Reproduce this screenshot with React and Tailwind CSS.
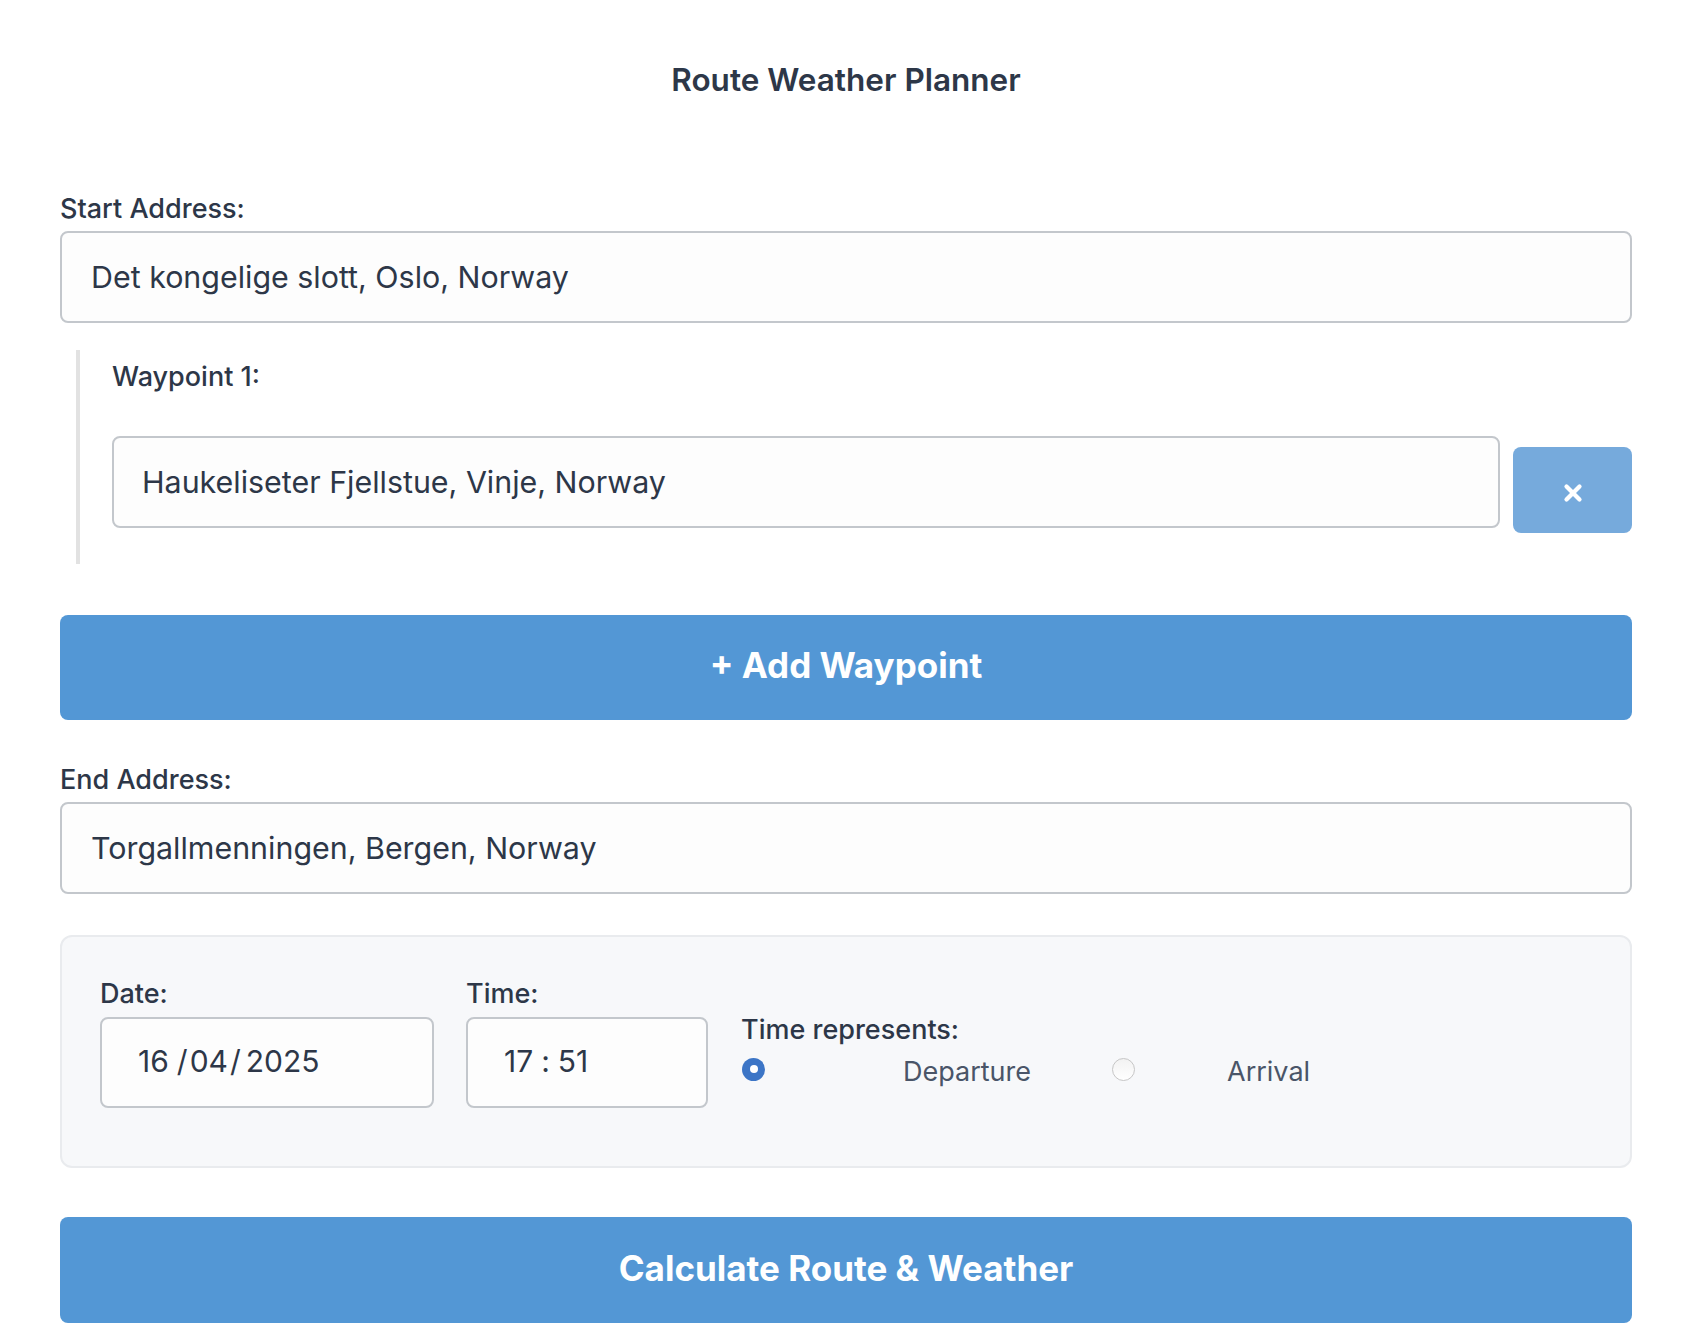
import React from "react";

function Label({ children, className = "" }) {
  return (
    <div className={"text-[27px] leading-[40px] font-medium text-[#2d3748] " + className}>
      {children}
    </div>
  );
}

function TextField({ value, className = "" }) {
  return (
    <input
      readOnly
      value={value}
      className={
        "block h-[92px] w-full rounded-[8px] border-2 border-[#c3c7cc] bg-[#fdfdfd] px-[29px] text-[30.4px] text-[#2d3748] outline-none " +
        className
      }
    />
  );
}

export default function App() {
  return (
    <div className="min-h-screen bg-white font-['Inter','Noto_Sans',sans-serif] text-[#2d3748]">
      <div className="px-[60px] pt-[57px] pb-[22px]">
        <h1 className="text-center text-[31.5px] leading-[45px] font-semibold text-[#2d3748]">
          Route Weather Planner
        </h1>

        <Label className="mt-[87px] mb-[2px]">Start Address:</Label>
        <TextField value="Det kongelige slott, Oslo, Norway" />

        <div className="mt-[27px] ml-[16px] border-l-4 border-[#e2e2e2] pl-[32px] pt-[7px] pb-[31px]">
          <Label>Waypoint 1:</Label>
          <div className="mt-[39px] flex items-start gap-[13px]">
            <TextField value="Haukeliseter Fjellstue, Vinje, Norway" className="flex-1 !pl-[28px]" />
            <button className="mt-[11px] flex h-[86px] w-[119px] shrink-0 items-center justify-center rounded-[8px] bg-[#76aadc]">
              <svg width="20" height="20" viewBox="0 0 20 20" className="mt-[6px]">
                <line x1="3.5" y1="3.5" x2="16.5" y2="16.5" stroke="white" strokeWidth="4.2" strokeLinecap="round" />
                <line x1="16.5" y1="3.5" x2="3.5" y2="16.5" stroke="white" strokeWidth="4.2" strokeLinecap="round" />
              </svg>
            </button>
          </div>
        </div>

        <button className="mt-[51px] flex h-[105px] w-full items-center justify-center rounded-[8px] bg-[#5397d5] pb-[4px] text-[35px] leading-none font-bold text-white">
          + Add Waypoint
        </button>

        <Label className="mt-[40px] mb-[2px]">End Address:</Label>
        <TextField value="Torgallmenningen, Bergen, Norway" />

        <div className="mt-[41px] rounded-[12px] border-2 border-[#e9ebee] bg-[#f7f8fa] px-[38px] pt-[37px] pb-[58px]">
          <div className="flex items-start">
            <div className="w-[334px]">
              <Label className="mb-[3px]">Date:</Label>
              <div className="flex h-[91px] items-center rounded-[8px] border-2 border-[#c3c7cc] bg-[#fdfdfd] pb-[2px] pl-[36px] text-[30px] text-[#2d3748]">
                <span>16</span>
                <span className="ml-[8px] mr-[2px]">/</span>
                <span>04</span>
                <span className="ml-[2px] mr-[5px]">/</span>
                <span>2025</span>
              </div>
            </div>
            <div className="ml-[32px] w-[242px]">
              <Label className="mb-[3px]">Time:</Label>
              <div className="flex h-[91px] items-center rounded-[8px] border-2 border-[#c3c7cc] bg-[#fdfdfd] pb-[2px] pl-[36px] text-[30px] text-[#2d3748]">
                <span>17</span>
                <span className="mx-[8px]">:</span>
                <span>51</span>
              </div>
            </div>
            <div className="ml-[33px] mt-[36px]">
              <Label className="mb-[2px]">Time represents:</Label>
              <div className="flex h-[40px] items-center text-[27px] text-[#4a5568]">
                <span className="mb-[6px] ml-[1px] flex h-[23px] w-[23px] items-center justify-center rounded-full bg-[#3c75c6]">
                  <span className="h-[8px] w-[8px] rounded-full bg-white" />
                </span>
                <span className="ml-[138px]">Departure</span>
                <span className="mb-[6px] ml-[81px] h-[23px] w-[23px] rounded-full border border-[#c6c6c6] bg-gradient-to-b from-[#f2f2f2] to-white" />
                <span className="ml-[92px]">Arrival</span>
              </div>
            </div>
          </div>
        </div>

        <button className="mt-[49px] flex h-[106px] w-full items-center justify-center rounded-[8px] bg-[#5397d5] pb-[4px] text-[35px] leading-none font-bold text-white">
          Calculate Route &amp; Weather
        </button>
      </div>
    </div>
  );
}
